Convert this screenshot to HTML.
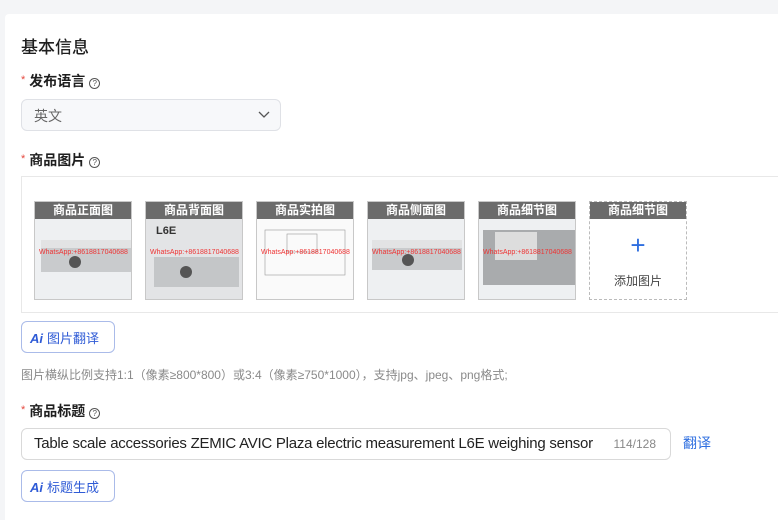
<!DOCTYPE html>
<html><head><meta charset="utf-8"><style>
*{margin:0;padding:0;box-sizing:border-box}
body{width:778px;height:520px;overflow:hidden;background:#f4f5f7;font-family:"Liberation Sans","Noto Sans CJK SC",sans-serif;position:relative}
.card{position:absolute;left:5px;top:14px;width:773px;height:506px;background:#fff;border-radius:4px 0 0 0}
.a{position:absolute}
.h{left:21px;top:33px;font-size:17px;color:#1f1f1f;font-weight:500}
.lab{font-size:14px;font-weight:bold;color:#1f1f1f;left:21px}
.lab i{color:#e5483f;font-style:normal;font-weight:normal;font-size:11px;margin-right:4px;vertical-align:3px}
.q{display:inline-block;width:11px;height:11px;border:1px solid #555;border-radius:50%;font-size:8px;line-height:9px;text-align:center;font-weight:normal;margin-left:4px;vertical-align:0px;color:#555}
.sel{left:21px;top:99px;width:260px;height:32px;border:1px solid #dfe1e6;border-radius:6px;background:#f7f8fa;font-size:14px;color:#666;padding:6px 12px}
.box{left:21px;top:176px;width:770px;height:137px;border:1px solid #e8e8e8}
.tile{top:201px;width:98px;height:99px;border:1px solid #c8c8c8;background:#eef0f2;overflow:hidden}
.tile .t{position:absolute;left:0;top:0;width:100%;height:17px;background:#6b6b6b;color:#fff;font-size:12px;font-weight:bold;text-align:center;line-height:17px}
.btn{left:21px;width:94px;height:32px;border:1px solid #aabbe9;border-radius:6px;color:#2f5bd6;font-size:13px;padding:6px 8px;background:#fff}
.btn b{font-style:italic;font-weight:bold;margin-right:4px;color:#2f5bd6}
.note{left:21px;top:366px;font-size:12px;color:#8a8a8a}
.inp{left:21px;top:428px;width:650px;height:32px;border:1px solid #d9d9d9;border-radius:6px;padding:6px 12px;font-size:15px;color:#222;letter-spacing:-0.25px;white-space:nowrap}
.inp span{position:absolute;right:14px;top:8px;font-size:12px;color:#888;letter-spacing:0}
</style></head><body>
<div class="card"></div>
<div class="a h">基本信息</div>
<div class="a lab" style="top:71px"><i>*</i>发布语言<span class="q">?</span></div>
<div class="a sel">英文<svg class="a" style="right:10px;top:11px" width="12" height="8"><path d="M1 1l5 5 5-5" stroke="#555" stroke-width="1.3" fill="none"/></svg></div>
<div class="a lab" style="top:150px"><i>*</i>商品图片<span class="q">?</span></div>
<div class="a box"></div>

<div class="a tile" style="left:34px"><svg width="98" height="99"><rect x="6" y="38" width="90" height="32" fill="#c9cbcd"/><rect x="6" y="38" width="90" height="8" fill="#e2e3e4"/><circle cx="40" cy="60" r="6" fill="#555"/><text x="4" y="52" font-size="7" fill="#e33" font-family="Liberation Sans">WhatsApp:+8618817040688</text></svg><div class="t">商品正面图</div></div>
<div class="a tile" style="left:145px;background:#e3e4e6"><svg width="98" height="99"><text x="10" y="32" font-size="11" font-weight="bold" fill="#333" font-family="Liberation Sans">L6E</text><rect x="8" y="55" width="85" height="30" fill="#c4c6c8"/><circle cx="40" cy="70" r="6" fill="#555"/><text x="4" y="52" font-size="7" fill="#e33" font-family="Liberation Sans">WhatsApp:+8618817040688</text></svg><div class="t">商品背面图</div></div>
<div class="a tile" style="left:256px;background:#fafafa"><svg width="98" height="99"><rect x="8" y="28" width="80" height="45" fill="none" stroke="#999" stroke-width=".6"/><rect x="30" y="32" width="30" height="18" fill="none" stroke="#999" stroke-width=".6"/><text x="4" y="52" font-size="7" fill="#e33" font-family="Liberation Sans">WhatsApp:+8618817040688</text></svg><div class="t">商品实拍图</div></div>
<div class="a tile" style="left:367px"><svg width="98" height="99"><rect x="4" y="38" width="90" height="30" fill="#c9cbcd"/><rect x="4" y="38" width="90" height="8" fill="#e2e3e4"/><circle cx="40" cy="58" r="6" fill="#555"/><text x="4" y="52" font-size="7" fill="#e33" font-family="Liberation Sans">WhatsApp:+8618817040688</text></svg><div class="t">商品侧面图</div></div>
<div class="a tile" style="left:478px"><svg width="98" height="99"><rect x="4" y="28" width="92" height="55" fill="#a9abad"/><rect x="16" y="30" width="42" height="28" fill="#ddd"/><text x="4" y="52" font-size="7" fill="#e33" font-family="Liberation Sans">WhatsApp:+8618817040688</text></svg><div class="t">商品细节图</div></div>
<div class="a tile" style="left:589px;background:#fff;border:1px dashed #bbb"><div class="t">商品细节图</div><div class="a" style="left:0;width:100%;top:28px;text-align:center;color:#2f6fe0;font-size:26px;font-weight:300">+</div><div class="a" style="left:0;width:100%;top:70px;text-align:center;color:#444;font-size:12px">添加图片</div></div>

<div class="a btn" style="top:321px"><b>Ai</b>图片翻译</div>
<div class="a note">图片横纵比例支持1:1（像素≥800*800）或3:4（像素≥750*1000），支持jpg、jpeg、png格式;</div>
<div class="a lab" style="top:401px"><i>*</i>商品标题<span class="q">?</span></div>
<div class="a inp">Table scale accessories ZEMIC AVIC Plaza electric measurement L6E weighing sensor<span>114/128</span></div>
<div class="a" style="left:683px;top:433px;font-size:14px;color:#2f6fe0">翻译</div>
<div class="a btn" style="top:470px"><b>Ai</b>标题生成</div>
</body></html>
